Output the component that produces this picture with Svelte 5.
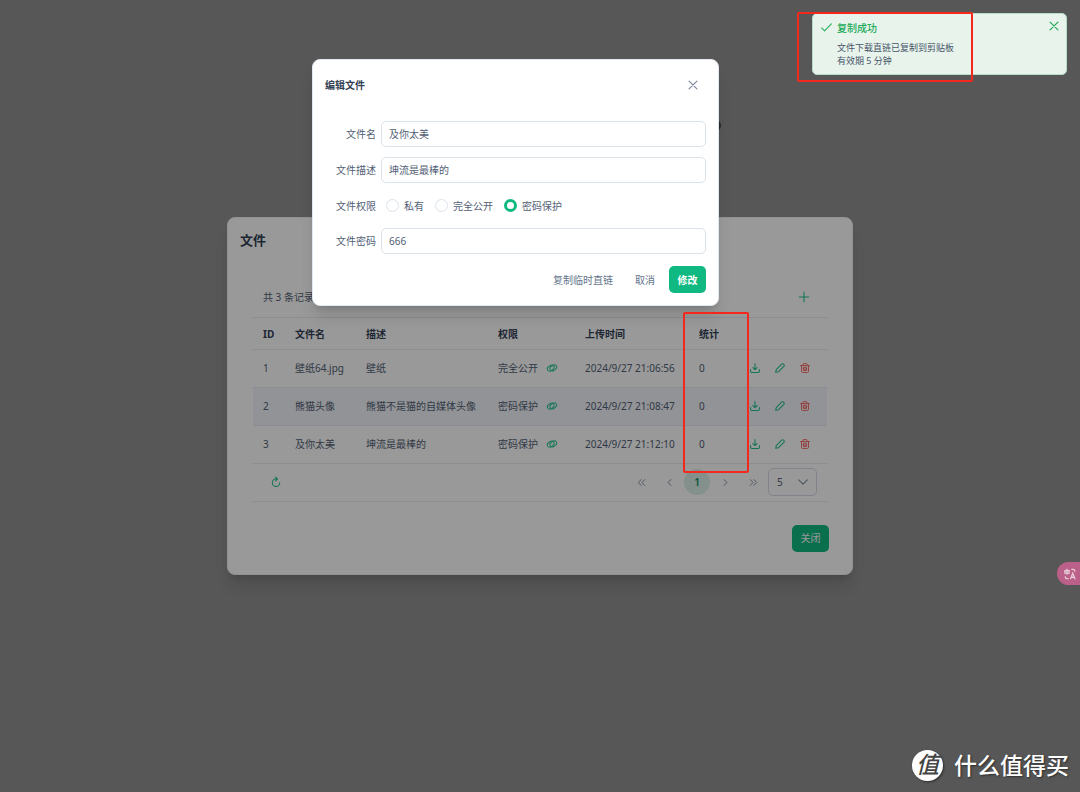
<script lang="ts">
	interface FileRow {
		id: number;
		name: string;
		description: string;
		permission: string;
		uploaded: string;
		count: number;
	}

	const files: FileRow[] = [
		{ id: 1, name: '壁纸64.jpg', description: '壁纸', permission: '完全公开', uploaded: '2024/9/27 21:06:56', count: 0 },
		{ id: 2, name: '熊猫头像', description: '熊猫不是猫的自媒体头像', permission: '密码保护', uploaded: '2024/9/27 21:08:47', count: 0 },
		{ id: 3, name: '及你太美', description: '坤流是最棒的', permission: '密码保护', uploaded: '2024/9/27 21:12:10', count: 0 }
	];
	const permissions = ['私有', '完全公开', '密码保护'];

	let name = $state('及你太美');
	let description = $state('坤流是最棒的');
	let permission = $state('密码保护');
	let password = $state('666');
	let pageSize = $state(5);
</script>

{#snippet icon(kind: string)}
	<svg class="icon {kind}" viewBox="0 0 14 14" aria-hidden="true">
		{#if kind === 'plus'}
			<path d="M7 .2v13.600M.2 7h13.600" />
		{:else if kind === 'close'}
			<path d="M1.500 1.500l11 11M12.500 1.500l-11 11" />
		{:else if kind === 'check'}
			<path d="M.8 7.600l3.800 3.800L13.200 2.400" />
		{:else if kind === 'download'}
			<path d="M7 .8v8.400M4 6.400l3 3 3-3M.8 9v2.600q0 1.600 1.600 1.600h9.200q1.600 0 1.600-1.600V9" />
		{:else if kind === 'pencil'}
			<path d="M1 13l.7-3.700 8-8q.9-.7 1.800 0l1.200 1.200q.7.9 0 1.800l-8 8z" />
		{:else if kind === 'trash'}
			<path d="M.8 3.600h12.400M4.200 3.400V1.900q0-1.100 1.100-1.100h3.400q1.100 0 1.100 1.100v1.500M2.100 3.800v7.900q0 1.500 1.500 1.500h6.800q1.500 0 1.500-1.500V3.800M4.800 6.600v3.800h4.400V6.600zM4.800 8.500h4.400" />
		{:else if kind === 'link'}
			<g transform="rotate(-35 7 7)">
				<rect x=".4" y="2.800" width="10" height="6.600" rx="3.300" />
				<rect x="3.600" y="4.600" width="10" height="6.600" rx="3.300" />
			</g>
		{:else if kind === 'refresh'}
			<path d="M8.400 2.800H7a5.200 5.200 0 1 0 5.200 5.200M6.400 .2L9 2.800 6.400 5.400" />
		{:else if kind === 'first'}
			<path d="M6.400 2.500L2 7l4.400 4.500M12 2.500L7.600 7l4.400 4.500" />
		{:else if kind === 'prev'}
			<path d="M9.200 2.500L4.800 7l4.400 4.500" />
		{:else if kind === 'next'}
			<path d="M4.800 2.500L9.200 7l-4.400 4.500" />
		{:else if kind === 'last'}
			<path d="M2 2.500L6.400 7 2 11.500M7.600 2.500L12 7l-4.400 4.500" />
		{:else if kind === 'down'}
			<path d="M1 4l6 6 6-6" />
		{/if}
	</svg>
{/snippet}

<main class="page">
	<span class="backdrop-mark"></span>

	<section class="dialog files" aria-label="文件">
		<h1>文件</h1>
		<div class="content">
			<div class="toolbar">
				<span>共 3 条记录</span>
				<button class="icon-button" aria-label="添加">{@render icon('plus')}</button>
			</div>
			<table>
				<colgroup>
					<col class="c-id" />
					<col class="c-name" />
					<col class="c-desc" />
					<col class="c-perm" />
					<col class="c-time" />
					<col class="c-count" />
					<col />
				</colgroup>
				<thead>
					<tr>
						<th>ID</th>
						<th>文件名</th>
						<th>描述</th>
						<th>权限</th>
						<th>上传时间</th>
						<th>统计</th>
						<th></th>
					</tr>
				</thead>
				<tbody>
					{#each files as file (file.id)}
						<tr>
							<td>{file.id}</td>
							<td>{file.name}</td>
							<td>{file.description}</td>
							<td>
								<span class="permission">
									{file.permission}
									<button class="link-button" aria-label="复制链接">{@render icon('link')}</button>
								</span>
							</td>
							<td>{file.uploaded}</td>
							<td>{file.count}</td>
							<td class="actions-cell">
								<div class="actions">
									<button class="icon-button" aria-label="下载">{@render icon('download')}</button>
									<button class="icon-button" aria-label="编辑">{@render icon('pencil')}</button>
									<button class="icon-button danger" aria-label="删除">{@render icon('trash')}</button>
								</div>
							</td>
						</tr>
					{/each}
				</tbody>
			</table>
			<nav class="paginator" aria-label="分页">
				<button class="icon-button refresh-button" aria-label="刷新">{@render icon('refresh')}</button>
				<button class="page-button" aria-label="首页">{@render icon('first')}</button>
				<button class="page-button" aria-label="上一页">{@render icon('prev')}</button>
				<button class="page-button current">1</button>
				<button class="page-button" aria-label="下一页">{@render icon('next')}</button>
				<button class="page-button" aria-label="末页">{@render icon('last')}</button>
				<div class="select">
					<select bind:value={pageSize} aria-label="每页条数">
						<option value={5}>5</option>
						<option value={10}>10</option>
					</select>
					{@render icon('down')}
				</div>
			</nav>
			<div class="files-footer">
				<button class="button primary">关闭</button>
			</div>
		</div>
	</section>

	<div class="mask"></div>

	<form class="dialog edit" aria-label="编辑文件" onsubmit={(e) => e.preventDefault()}>
		<header>
			<h2>编辑文件</h2>
			<button type="button" class="icon-button muted" aria-label="关闭">{@render icon('close')}</button>
		</header>
		<div class="fields">
			<label for="file-name">文件名</label>
			<input id="file-name" type="text" bind:value={name} />
			<label for="file-desc">文件描述</label>
			<input id="file-desc" type="text" bind:value={description} />
			<span class="label" id="perm-label">文件权限</span>
			<div class="radios" role="radiogroup" aria-labelledby="perm-label">
				{#each permissions as option (option)}
					<label><input type="radio" name="permission" value={option} bind:group={permission} />{option}</label>
				{/each}
			</div>
			<label for="file-pass">文件密码</label>
			<input id="file-pass" type="text" bind:value={password} />
		</div>
		<footer>
			<button type="button" class="button">复制临时直链</button>
			<button type="button" class="button">取消</button>
			<button class="button primary strong">修改</button>
		</footer>
	</form>

	<aside class="toast" role="status">
		{@render icon('check')}
		<div class="toast-text">
			<strong>复制成功</strong>
			<p>文件下载直链已复制到剪贴板<br />有效期 5 分钟</p>
		</div>
		<button class="toast-close" aria-label="关闭">{@render icon('close')}</button>
	</aside>

	<span class="marker marker-toast"></span>
	<span class="marker marker-count"></span>

	<button class="translate" aria-label="翻译">
		<svg viewBox="0 0 14 14" aria-hidden="true">
			<path d="M1 3h5v3H1zM3.500 1v7M8.500 1.500h2.300q1.700 0 1.700 1.700v1.300M1.500 9.500v1q0 1.800 1.800 1.800H5.500M7.500 13l2.700-7 2.800 7M8.400 10.800h3.700" />
		</svg>
	</button>

	<div class="watermark">
		<span class="seal">值</span>
		<span>什么值得买</span>
	</div>
</main>

<style>
	:global(body) {
		margin: 0;
	}

	.page {
		position: relative;
		display: flex;
		align-items: center;
		justify-content: center;
		min-height: 100vh;
		overflow: hidden;
		background: #919191;
		color: #526075;
		font: 10px/16px 'Noto Sans', 'Noto Sans CJK SC', sans-serif;
	}

	.page * {
		box-sizing: border-box;
	}

	button,
	input,
	select {
		margin: 0;
		font: inherit;
		color: inherit;
	}

	button {
		display: inline-flex;
		align-items: center;
		justify-content: center;
		padding: 0;
		border: 0;
		background: none;
		cursor: pointer;
	}

	h1,
	h2,
	p {
		margin: 0;
	}

	.icon {
		flex: none;
		width: 10px;
		height: 10px;
		fill: none;
		stroke: currentColor;
		stroke-width: 1.5;
		stroke-linecap: round;
		stroke-linejoin: round;
		overflow: visible;
	}

	.icon.trash,
	.icon.link {
		stroke-width: 1.3;
	}

	.icon.close {
		stroke-width: 1.7;
	}

	.dialog {
		border: 1px solid #e2e8f0;
		border-radius: 8px;
		background: #fff;
		box-shadow: 0 13px 16px -3px rgb(0 0 0 / 12%), 0 5px 6px -4px rgb(0 0 0 / 12%);
	}

	.files {
		width: min(626px, 100%);
		padding: 12px;
		border-color: #f1f5f9;
	}

	.files h1 {
		color: #334155;
		font-size: 13px;
		line-height: 20px;
		font-weight: 700;
	}

	.content {
		padding: 34px 13px 10px;
	}

	.toolbar {
		display: flex;
		align-items: center;
		justify-content: space-between;
		height: 34px;
		padding: 0 10px 8px;
		border-bottom: 1px solid #e6ebf2;
	}

	table {
		width: 100%;
		table-layout: fixed;
		border-collapse: collapse;
	}

	.c-id {
		width: 32px;
	}

	.c-name {
		width: 71px;
	}

	.c-desc {
		width: 132px;
	}

	.c-perm {
		width: 87px;
	}

	.c-time {
		width: 114px;
	}

	.c-count {
		width: 54px;
	}

	th,
	td {
		height: 38px;
		padding: 0 0 0 10px;
		border-bottom: 1px solid #e6ebf2;
		text-align: left;
		white-space: nowrap;
	}

	th {
		height: 31px;
		color: #334155;
		font-weight: 700;
	}

	tbody tr:nth-child(2) {
		background: #f3f6fa;
	}

	.actions-cell {
		padding: 0 10px 0 0;
	}

	.actions {
		display: flex;
		justify-content: flex-end;
	}

	.icon-button {
		width: 26px;
		height: 26px;
		color: #1fc48e;
	}

	.danger {
		color: #f8605f;
	}

	.muted {
		color: #7b899e;
	}

	.permission {
		display: flex;
		align-items: center;
		gap: 9px;
	}

	.link-button {
		color: #1fc48e;
	}

	.paginator {
		display: flex;
		align-items: center;
		gap: 2px;
		height: 38px;
		padding: 0 10px;
		border-bottom: 1px solid #e6ebf2;
	}

	.refresh-button {
		margin-right: auto;
	}

	.page-button {
		width: 26px;
		height: 26px;
		border-radius: 50%;
		color: #7d8ba0;
	}

	.page-button .icon {
		width: 9px;
		height: 9px;
	}

	.page-button.current {
		background: #dcf1e8;
		color: #0b8a63;
		font-weight: 600;
	}

	.select {
		display: flex;
		align-items: center;
		position: relative;
	}

	.select select {
		width: 49px;
		height: 28px;
		padding: 0 8px;
		border: 1px solid #d5dde7;
		border-radius: 5px;
		background: none;
		appearance: none;
	}

	.select .icon {
		position: absolute;
		right: 9px;
		color: #7d8ba0;
		pointer-events: none;
	}

	.files-footer {
		display: flex;
		justify-content: flex-end;
		margin: 23px -2px 0 0;
	}

	.button {
		height: 27px;
		padding: 0 8px;
		border-radius: 5px;
		color: #64748b;
	}

	.primary {
		min-width: 37px;
		background: #10b981;
		color: #fff;
	}

	.strong {
		font-weight: 700;
	}

	.mask {
		position: absolute;
		inset: 0;
		background: rgb(0 0 0 / 40%);
	}

	.edit {
		position: absolute;
		top: 59px;
		left: 312px;
		width: min(407px, 100%);
		padding: 12px;
	}

	.edit header {
		display: flex;
		align-items: center;
		justify-content: space-between;
	}

	.edit h2 {
		color: #334155;
		font-size: 10px;
		font-weight: 700;
	}

	.fields {
		display: grid;
		grid-template-columns: 51px 1fr;
		align-items: center;
		gap: 10px 5px;
		padding-top: 23px;
	}

	.fields > label,
	.label {
		text-align: right;
	}

	.fields input[type='text'] {
		width: 100%;
		height: 26px;
		padding: 0 7px 1px;
		border: 1px solid #dbe2ea;
		border-radius: 5px;
		background: #fff;
		outline: none;
	}

	.radios {
		display: flex;
		align-items: center;
		gap: 11px;
		height: 25px;
		padding-left: 5px;
	}

	.radios label {
		display: flex;
		align-items: center;
		gap: 5px;
	}

	.radios input {
		width: 13px;
		height: 13px;
		border: 1px solid #dbe2ea;
		border-radius: 50%;
		background: #fff;
		appearance: none;
	}

	.radios input:checked {
		border: 3px solid #10b981;
	}

	.edit footer {
		display: flex;
		justify-content: flex-end;
		gap: 6px;
		padding-top: 12px;
	}

	.toast {
		position: absolute;
		top: 13px;
		right: 13px;
		display: flex;
		gap: 5px;
		width: 255px;
		padding: 6px 7px 7px 8px;
		border: 1px solid #b5dcc4;
		border-radius: 5px;
		background: #e8f3ec;
		color: #22ab58;
	}

	.toast .check {
		width: 11px;
		height: 11px;
		margin-top: 2px;
		stroke-width: 1.3;
	}

	.toast-text {
		flex: 1;
	}

	.toast strong {
		display: block;
		font-weight: 500;
	}

	.toast p {
		margin-top: 5px;
		color: #475569;
		font-size: 9px;
		line-height: 13px;
	}

	.toast-close {
		align-self: flex-start;
		width: 10px;
		height: 12px;
	}

	/* red call-outs drawn over the window */
	.marker {
		position: absolute;
		border: 2px solid #f5281e;
		border-radius: 2px;
		pointer-events: none;
	}

	.marker-toast {
		top: 12px;
		left: 797px;
		width: 176px;
		height: 70px;
	}

	.marker-count {
		top: 312px;
		left: 683px;
		width: 66px;
		height: 161px;
	}

	.backdrop-mark {
		position: absolute;
		top: 119px;
		left: 708px;
		width: 13px;
		height: 13px;
		border-radius: 50%;
		background: #444;
	}

	.translate {
		position: absolute;
		top: 562px;
		right: 0;
		width: 23px;
		height: 23px;
		border-radius: 12px 0 0 12px;
		background: #bb6088;
		color: #e6cdd8;
	}

	.translate svg {
		width: 12px;
		height: 12px;
		margin-left: 3px;
		fill: none;
		stroke: currentColor;
		stroke-width: 1.5;
	}

	.watermark {
		position: absolute;
		right: 11px;
		bottom: 10px;
		display: flex;
		align-items: center;
		gap: 11px;
		color: #fff;
		font-size: 23px;
		line-height: 34px;
		font-weight: 500;
		text-shadow: 1px 1px 2px rgb(0 0 0 / 50%);
	}

	.seal {
		width: 31px;
		height: 31px;
		border-radius: 50%;
		background: #fff;
		box-shadow: 1px 1px 2px rgb(0 0 0 / 50%);
		color: #444;
		line-height: 29px;
		font-style: italic;
		text-align: center;
		text-shadow: none;
	}
</style>
